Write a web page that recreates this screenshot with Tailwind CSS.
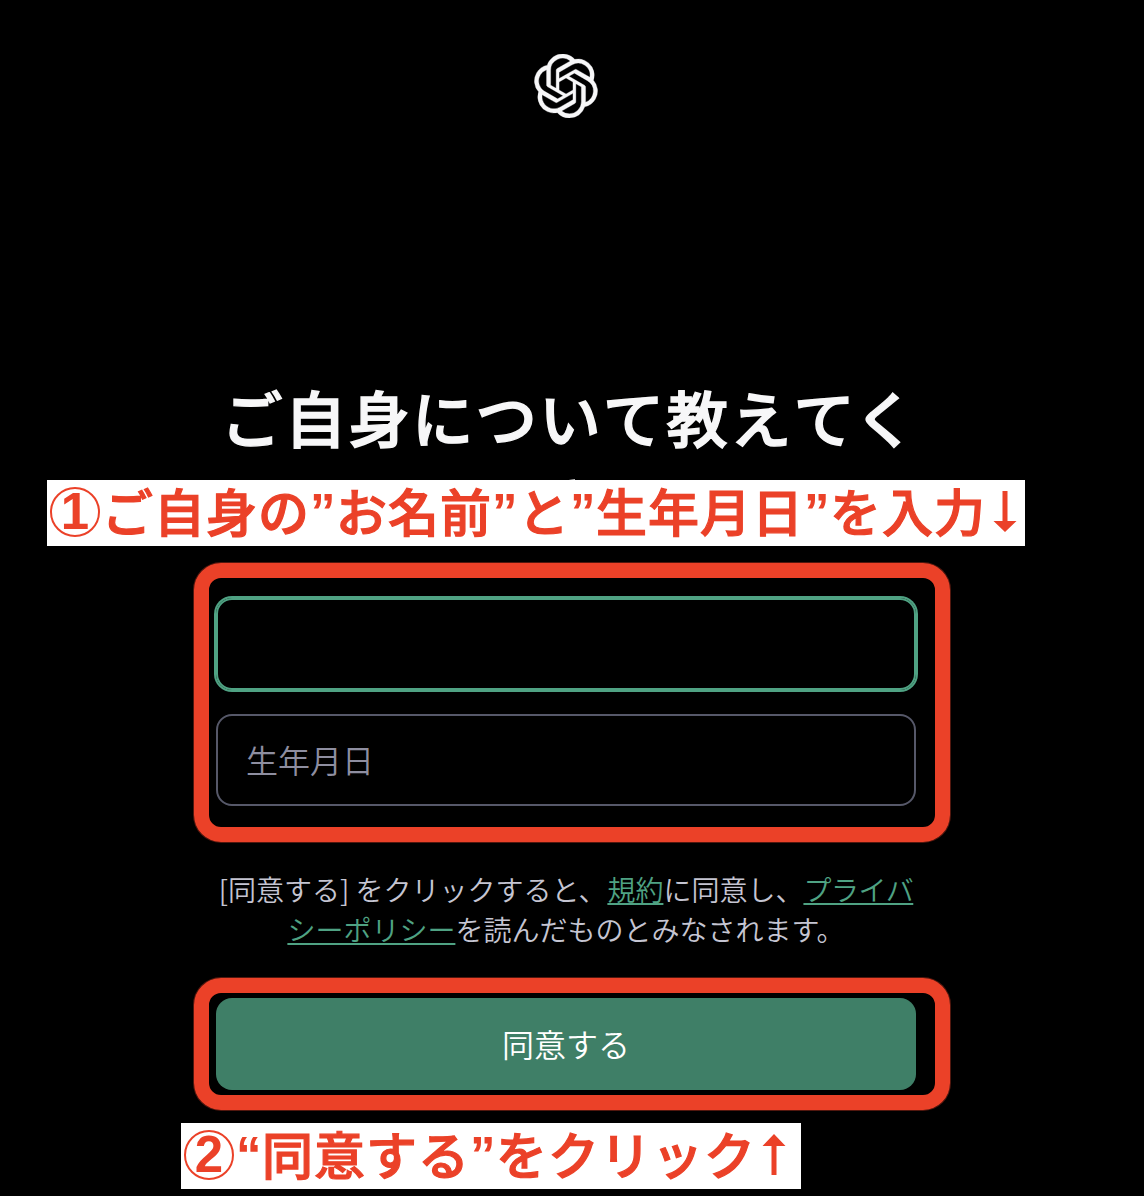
<!DOCTYPE html>
<html lang="ja">
<head>
<meta charset="utf-8">
<title>ご自身について教えてください</title>
<script src="https://cdn.jsdelivr.net/npm/@tailwindcss/browser@4"></script>
</head>
<body class="bg-black">
<div class="relative h-[1196px] w-[1144px] overflow-hidden bg-black font-['Noto_Sans_CJK_JP',sans-serif]">
  <main class="ml-[216px] flex w-[700px] flex-col items-center pt-[54px]">
    <svg class="size-16 text-[#f7f7f8]" viewBox="0 0 24 24" fill="currentColor" stroke="currentColor" stroke-width="0.12" role="img" aria-label="OpenAI"><path d="M22.2819 9.8211a5.9847 5.9847 0 0 0-.5157-4.9108 6.0462 6.0462 0 0 0-6.5098-2.9A6.0651 6.0651 0 0 0 4.9807 4.1818a5.9847 5.9847 0 0 0-3.9977 2.9 6.0462 6.0462 0 0 0 .7427 7.0966 5.98 5.98 0 0 0 .511 4.9107 6.051 6.051 0 0 0 6.5146 2.9001A5.9847 5.9847 0 0 0 13.2599 24a6.0557 6.0557 0 0 0 5.7718-4.2058 5.9894 5.9894 0 0 0 3.9977-2.9001 6.0557 6.0557 0 0 0-.7475-7.0729zm-9.022 12.6081a4.4755 4.4755 0 0 1-2.8764-1.0408l.1419-.0804 4.7783-2.7582a.7948.7948 0 0 0 .3927-.6813v-6.7369l2.02 1.1686a.071.071 0 0 1 .038.052v5.5826a4.504 4.504 0 0 1-4.4945 4.4944zm-9.6607-4.1254a4.4708 4.4708 0 0 1-.5346-3.0137l.142.0852 4.783 2.7582a.7712.7712 0 0 0 .7806 0l5.8428-3.3685v2.3324a.0804.0804 0 0 1-.0332.0615L9.74 19.9502a4.4992 4.4992 0 0 1-6.1408-1.6464zM2.3408 7.8956a4.485 4.485 0 0 1 2.3655-1.9728V11.6a.7664.7664 0 0 0 .3879.6765l5.8144 3.3543-2.0201 1.1685a.0757.0757 0 0 1-.071 0l-4.8303-2.7865A4.504 4.504 0 0 1 2.3408 7.872zm16.5963 3.8558L13.1038 8.364 15.1192 7.2a.0757.0757 0 0 1 .071 0l4.8303 2.7913a4.4944 4.4944 0 0 1-.6765 8.1042v-5.6772a.79.79 0 0 0-.407-.667zm2.0107-3.0231l-.142-.0852-4.7735-2.7818a.7759.7759 0 0 0-.7854 0L9.409 9.2297V6.8974a.0662.0662 0 0 1 .0284-.0615l4.8303-2.7866a4.4992 4.4992 0 0 1 6.6802 4.66zM8.3065 12.863l-2.02-1.1638a.0804.0804 0 0 1-.038-.0567V6.0742a4.4992 4.4992 0 0 1 7.3757-3.4537l-.142.0805L8.704 5.459a.7948.7948 0 0 0-.3927.6813zm1.0976-2.3654l2.602-1.4998 2.6069 1.4998v2.9994l-2.5974 1.4997-2.6067-1.4997Z"/></svg>

    <h1 class="mt-[255px] h-[225px] pl-[7px] text-center text-[61.5px] leading-[87px] font-medium tracking-[2.1px] whitespace-nowrap text-[#f7f7f8] [font-kerning:none] [-webkit-text-stroke:1.4px_#f7f7f8]">ご自身について教えて<span class="-ml-[3px]">く</span><br>ださい</h1>

    <div class="flex w-full flex-col gap-6">
      <div class="h-[92px] rounded-2xl border-2 border-[#4fa283] ring-2 ring-[#4fa283]"></div>
      <div class="flex h-[92px] items-center rounded-2xl border-2 border-[#565869] px-7 pb-0.5 text-[32px] font-[350] text-[#8e8ea0]">生年月日</div>
    </div>

    <p class="mt-[63px] text-center text-[28px] leading-10 font-[350] whitespace-nowrap text-[#c5c5d2]">[同意する] をクリックすると、<a class="ml-px text-[#4fa283] underline decoration-2 underline-offset-2 [text-decoration-skip-ink:none]">規約</a>に同意し、<a class="text-[#4fa283] underline decoration-2 underline-offset-2 [text-decoration-skip-ink:none]"><span class="tracking-[-0.4px]">プライバ</span><br>シーポリシー</a>を読んだものとみなされます。</p>

    <button class="mt-[49px] h-[92px] w-full rounded-2xl bg-[#3f7f67] pb-0.5 text-[32px] font-[350] text-white">同意する</button>
  </main>

  <!-- callout annotations -->
  <div class="absolute top-[563px] left-[194px] h-[279px] w-[756px] rounded-[27px] border-[15px] border-[#eb4128] shadow-[0_0_0_1px_#eb412859]"></div>
  <div class="absolute top-[978px] left-[194px] h-[132px] w-[756px] rounded-[27px] border-[15px] border-[#eb4128] shadow-[0_0_0_1px_#eb412859]"></div>

  <div class="absolute top-[480px] left-[47px] flex h-[66px] w-[978px] items-center bg-white pl-[3px] text-[51px] leading-[50px] font-medium tracking-[1px] whitespace-nowrap text-[#eb4128] [font-kerning:none]">
    <span class="mr-[2px] mb-0.5 flex size-[50px] shrink-0 items-center justify-center rounded-full border-2 border-[#eb4128] font-['Liberation_Sans',sans-serif] font-bold tracking-normal">1</span>
    <span class="pb-1.5 [-webkit-text-stroke:1.2px_#eb4128]">ご自身の</span><span class="w-[26px] font-['Liberation_Sans',sans-serif] font-bold tracking-normal">”</span><span class="pb-1.5 [-webkit-text-stroke:1.2px_#eb4128]">お名前</span><span class="w-[26px] font-['Liberation_Sans',sans-serif] font-bold tracking-normal">”</span><span class="pb-1.5 [-webkit-text-stroke:1.2px_#eb4128]">と</span><span class="w-[26px] font-['Liberation_Sans',sans-serif] font-bold tracking-normal">”</span><span class="pb-1.5 [-webkit-text-stroke:1.2px_#eb4128]">生年月日</span><span class="w-[26px] font-['Liberation_Sans',sans-serif] font-bold tracking-normal">”</span><span class="pb-1.5 [-webkit-text-stroke:1.2px_#eb4128]">を入力</span>
    <svg class="mb-0.5 ml-[6.5px] h-[42px] w-[24px]" viewBox="0 0 24 42" fill="currentColor" role="img" aria-label="↓"><path d="M9.500 0h5v30H23.500L12 41 .5 30h9z"/></svg>
  </div>

  <div class="absolute top-[1123px] left-[181px] flex h-[66px] w-[620px] items-center bg-white pl-[3px] text-[51px] leading-[50px] font-medium tracking-[1px] whitespace-nowrap text-[#eb4128] [font-kerning:none]">
    <span class="mr-[2px] mb-0.5 flex size-[50px] shrink-0 items-center justify-center rounded-full border-2 border-[#eb4128] font-['Liberation_Sans',sans-serif] font-bold tracking-normal">2</span>
    <span class="w-[26px] font-['Liberation_Sans',sans-serif] font-bold tracking-normal">“</span><span class="pb-1.5 [-webkit-text-stroke:1.2px_#eb4128]">同意する</span><span class="w-[26px] font-['Liberation_Sans',sans-serif] font-bold tracking-normal">”</span><span class="pb-1.5 [-webkit-text-stroke:1.2px_#eb4128]">をクリック</span>
    <svg class="mb-0.5 ml-[5.5px] h-[42px] w-[24px]" viewBox="0 0 24 42" fill="currentColor" role="img" aria-label="↑"><path d="M9.500 41h5V12H23.500L12 0 .5 12h9z"/></svg>
  </div>
</div>
</body>
</html>
